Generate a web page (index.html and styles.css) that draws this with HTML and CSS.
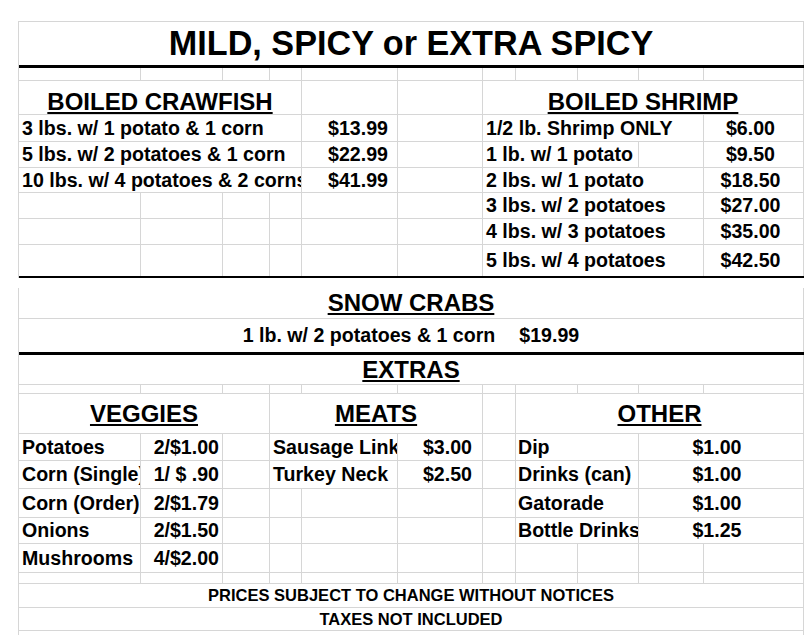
FILE: index.html
```html
<!DOCTYPE html>
<html>
<head>
<meta charset="utf-8">
<title>Menu</title>
<link rel="stylesheet" href="styles.css">
</head>
<body>
<div class="page">
  <div class="sheet sheet-top">
    <div class="row h-title thick3">
      <div class="c sp11 ctr title">MILD, SPICY or EXTRA SPICY</div>
    </div>
    <div class="row h-sp13">
      <div class="c"></div><div class="c"></div><div class="c"></div><div class="c"></div><div class="c"></div><div class="c"></div><div class="c"></div><div class="c"></div><div class="c"></div><div class="c"></div><div class="c"></div>
    </div>
    <div class="row h-34">
      <div class="c sp4 ctr hd lowered">BOILED CRAWFISH</div>
      <div class="c"></div>
      <div class="c"></div>
      <div class="c sp5 ctr hd lowered">BOILED SHRIMP</div>
    </div>
    <div class="row h-27">
      <div class="c sp4">3 lbs. w/ 1 potato &amp; 1 corn</div>
      <div class="c rt pr-cf">$13.99</div>
      <div class="c"></div>
      <div class="c sp4">1/2 lb. Shrimp ONLY</div>
      <div class="c ctr pr-sh">$6.00</div>
    </div>
    <div class="row h-26">
      <div class="c sp4">5 lbs. w/ 2 potatoes &amp; 1 corn</div>
      <div class="c rt pr-cf">$22.99</div>
      <div class="c"></div>
      <div class="c sp3">1 lb. w/ 1 potato</div>
      <div class="c"></div>
      <div class="c ctr pr-sh">$9.50</div>
    </div>
    <div class="row h-25">
      <div class="c sp4">10 lbs. w/ 4 potatoes &amp; 2 corns</div>
      <div class="c rt pr-cf">$41.99</div>
      <div class="c"></div>
      <div class="c sp4">2 lbs. w/ 1 potato</div>
      <div class="c ctr pr-sh">$18.50</div>
    </div>
    <div class="row h-26">
      <div class="c"></div><div class="c"></div><div class="c"></div><div class="c"></div><div class="c"></div><div class="c"></div>
      <div class="c sp4">3 lbs. w/ 2 potatoes</div>
      <div class="c ctr pr-sh">$27.00</div>
    </div>
    <div class="row h-26">
      <div class="c"></div><div class="c"></div><div class="c"></div><div class="c"></div><div class="c"></div><div class="c"></div>
      <div class="c sp4">4 lbs. w/ 3 potatoes</div>
      <div class="c ctr pr-sh">$35.00</div>
    </div>
    <div class="row h-33 thick2">
      <div class="c"></div><div class="c"></div><div class="c"></div><div class="c"></div><div class="c"></div><div class="c"></div>
      <div class="c sp4">5 lbs. w/ 4 potatoes</div>
      <div class="c ctr pr-sh">$42.50</div>
    </div>
  </div>

  <div class="sheet sheet-bottom">
    <div class="row h-31">
      <div class="c sp11 ctr hd">SNOW CRABS</div>
    </div>
    <div class="row h-36 thick3">
      <div class="c sp11 ctr pair"><span>1 lb. w/ 2 potatoes &amp; 1 corn</span><span>$19.99</span></div>
    </div>
    <div class="row h-30">
      <div class="c sp11 ctr hd">EXTRAS</div>
    </div>
    <div class="row h-9">
      <div class="c"></div><div class="c"></div><div class="c"></div><div class="c"></div><div class="c"></div><div class="c"></div><div class="c"></div><div class="c"></div><div class="c"></div><div class="c"></div><div class="c"></div>
    </div>
    <div class="row h-40">
      <div class="c sp3 ctr hd">VEGGIES</div>
      <div class="c sp3 ctr hd">MEATS</div>
      <div class="c"></div>
      <div class="c sp4 ctr hd">OTHER</div>
    </div>
    <div class="row h-27">
      <div class="c">Potatoes</div>
      <div class="c rt">2/$1.00</div>
      <div class="c"></div>
      <div class="c sp2">Sausage Link</div>
      <div class="c rt pr-mt">$3.00</div>
      <div class="c"></div>
      <div class="c sp2 oth">Dip</div>
      <div class="c sp2 ctr pr-ot">$1.00</div>
    </div>
    <div class="row h-28">
      <div class="c">Corn (Single)</div>
      <div class="c rt">1/ $ .90</div>
      <div class="c"></div>
      <div class="c sp2">Turkey Neck</div>
      <div class="c rt pr-mt">$2.50</div>
      <div class="c"></div>
      <div class="c sp2 oth">Drinks (can)</div>
      <div class="c sp2 ctr pr-ot">$1.00</div>
    </div>
    <div class="row h-29">
      <div class="c">Corn (Order)</div>
      <div class="c rt">2/$1.79</div>
      <div class="c"></div><div class="c"></div><div class="c"></div><div class="c"></div><div class="c"></div>
      <div class="c sp2 oth">Gatorade</div>
      <div class="c sp2 ctr pr-ot">$1.00</div>
    </div>
    <div class="row h-26">
      <div class="c">Onions</div>
      <div class="c rt">2/$1.50</div>
      <div class="c"></div><div class="c"></div><div class="c"></div><div class="c"></div><div class="c"></div>
      <div class="c sp2 oth">Bottle Drinks</div>
      <div class="c sp2 ctr pr-ot">$1.25</div>
    </div>
    <div class="row h-29">
      <div class="c">Mushrooms</div>
      <div class="c rt">4/$2.00</div>
      <div class="c"></div><div class="c"></div><div class="c"></div><div class="c"></div><div class="c"></div><div class="c"></div><div class="c"></div><div class="c"></div><div class="c"></div>
    </div>
    <div class="row h-11">
      <div class="c"></div><div class="c"></div><div class="c"></div><div class="c"></div><div class="c"></div><div class="c"></div><div class="c"></div><div class="c"></div><div class="c"></div><div class="c"></div><div class="c"></div>
    </div>
    <div class="row h-24">
      <div class="c sp11 ctr note">PRICES SUBJECT TO CHANGE WITHOUT NOTICES</div>
    </div>
    <div class="row h-23">
      <div class="c sp11 ctr note">TAXES NOT INCLUDED</div>
    </div>
    <div class="row h-30">
      <div class="c sp11"></div>
    </div>
  </div>
</div>
</body>
</html>
```

FILE: styles.css
```css
html, body {
  margin: 0;
  padding: 0;
  overflow: hidden;
  background: #ffffff;
}

body {
  font-family: "Liberation Sans", Arial, sans-serif;
  font-weight: bold;
  color: #000000;
}

.page {
  padding: 21px 0 0 18px;
  width: 786px;
}

.sheet {
  border-left: 1px solid #d6d6d6;
  width: 785px;
}

.sheet-top {
  border-top: 1px solid #d6d6d6;
}

.sheet-bottom {
  margin-top: 10px;
}

.row {
  display: grid;
  grid-template-columns: 122px 82px 47px 32px 96px 85px 33px 62px 61px 65px 100px;
  border-bottom: 1px solid #d6d6d6;
  box-sizing: border-box;
  overflow: hidden;
}

.thick3 { border-bottom: 3px solid #000000; }
.thick2 { border-bottom: 2px solid #000000; }

.h-title { height: 46px; }
.h-sp13 { height: 13px; }
.h-9 { height: 9px; }
.h-11 { height: 11px; }
.h-23 { height: 23px; }
.h-24 { height: 24px; }
.h-25 { height: 25px; }
.h-26 { height: 26px; }
.h-27 { height: 27px; }
.h-28 { height: 28px; }
.h-29 { height: 29px; }
.h-30 { height: 30px; }
.h-31 { height: 31px; }
.h-33 { height: 33px; }
.h-34 { height: 34px; }
.h-36 { height: 36px; }
.h-40 { height: 40px; }

.c {
  box-sizing: border-box;
  border-right: 1px solid #d6d6d6;
  display: flex;
  align-items: center;
  overflow: hidden;
  white-space: pre;
  font-size: 19.6px;
  line-height: 1.15;
  padding: 0 3px;
  min-width: 0;
}

.sp2 { grid-column: span 2; }
.sp3 { grid-column: span 3; }
.sp4 { grid-column: span 4; }
.sp5 { grid-column: span 5; }
.sp11 { grid-column: span 11; }

.ctr { justify-content: center; }
.rt { justify-content: flex-end; }

.oth {
  padding-left: 2px;
  padding-right: 0;
}

.title {
  font-size: 34.2px;
}

.hd {
  font-size: 24px;
  text-decoration: underline;
  text-decoration-thickness: 2px;
  text-underline-offset: 2px;
}

.lowered {
  padding-top: 8px;
}

.pr-cf { padding-right: 9px; }
.pr-sh { padding-right: 9px; }
.pr-mt { padding-right: 10px; }
.pr-ot { padding-right: 11px; }

.pair {
  gap: 24px;
}

.note {
  font-size: 16.5px;
}
```
